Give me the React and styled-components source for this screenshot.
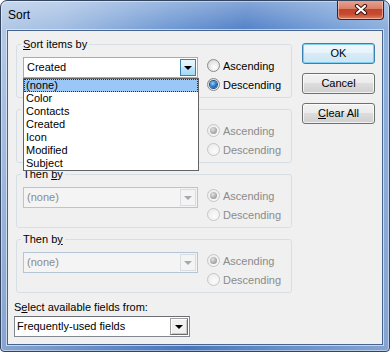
import styled, { createGlobalStyle, css } from 'styled-components';

const GlobalStyle = createGlobalStyle`
  html, body {
    margin: 0;
    padding: 0;
    background: #ffffff;
  }
  body {
    font-family: "Liberation Sans", Arial, sans-serif;
    font-size: 11px;
    color: #000;
  }
`;

const Window = styled.div`
  width: 390px;
  height: 352px;
  box-sizing: border-box;
  border: 1px solid #34465f;
  border-radius: 7px 7px 4px 4px;
  background:
    linear-gradient(180deg, rgba(255, 255, 255, 0.28) 0, rgba(255, 255, 255, 0) 28px),
    linear-gradient(180deg, rgba(30, 70, 140, 0) 0, rgba(30, 70, 140, 0) 40px, rgba(30, 70, 140, 0.22) 100%),
    linear-gradient(100deg, #b3c9e6 0%, #a4bfe3 14%, #729bd4 38%, #5583c8 55%, #77a0d7 74%, #a2bfe4 100%);
  box-shadow: inset 0 0 0 1px rgba(255, 255, 255, 0.45);
  display: flex;
  flex-direction: column;
  overflow: hidden;
`;

const TitleBar = styled.div`
  height: 29px;
  display: flex;
  align-items: flex-start;
  padding-left: 7px;
`;

const Title = styled.span`
  font-family: "Liberation Sans", Arial, sans-serif;
  font-size: 12px;
  line-height: 15px;
  padding-top: 7px;
  color: #000;
`;

const CloseButton = styled.div`
  margin-left: auto;
  margin-right: 5px;
  margin-top: -1px;
  width: 47px;
  height: 20px;
  box-sizing: border-box;
  border: 1px solid #4a1d16;
  border-top: none;
  border-radius: 0 0 4px 4px;
  background: linear-gradient(180deg, #e9a593 0%, #d98068 45%, #c1432b 50%, #c74a30 75%, #e0805e 100%);
  box-shadow: inset 0 0 0 1px rgba(255, 220, 210, 0.55);
  display: flex;
  align-items: center;
  justify-content: center;
`;

const Client = styled.div`
  flex: 1;
  margin: 0 6px 6px 6px;
  background: #f0f0f0;
  border: 1px solid #46648f;
  box-shadow: 0 0 0 1px rgba(230, 238, 248, 0.7);
  display: grid;
  grid-template-columns: 278px 73px;
  column-gap: 10px;
  padding: 6px 7px 0 6px;
`;

const LeftColumn = styled.div`
  display: flex;
  flex-direction: column;
`;

const Group = styled.fieldset`
  margin: 0 0 4px 2px;
  min-width: 0;
  border: 1px solid #d5dfe5;
  border-radius: 3px;
  padding: 5px 6px 3px 6px;
`;

const Legend = styled.legend`
  padding: 0 2px;
  margin-left: -2px;
  line-height: 14px;
  color: #000;
`;

const GroupRow = styled.div`
  display: flex;
  align-items: flex-start;
`;

const ComboWrap = styled.div`
  position: relative;
  margin-top: 1px;
`;

const Combo = styled.div`
  width: ${p => p.$width || 175}px;
  height: 21px;
  box-sizing: border-box;
  display: flex;
  align-items: stretch;
  background: ${p => (p.$disabled ? '#f4f4f4' : '#ffffff')};
  border: 1px solid ${p => (p.$disabled ? '#b5c5d6' : '#a5acb5')};
  ${p =>
    p.$classic &&
    css`
      border-color: #828790;
      border-top-color: #6b6f75;
    `}
`;

const ComboText = styled.span`
  flex: 1;
  padding-left: ${p => (p.$classic ? 2 : 3)}px;
  line-height: 19px;
  color: ${p => (p.$disabled ? '#8b8b8b' : '#000')};
  white-space: nowrap;
  overflow: hidden;
`;

const ArrowButton = styled.div`
  width: 16px;
  margin: 1px;
  box-sizing: border-box;
  display: flex;
  align-items: center;
  justify-content: center;
  ${p =>
    p.$variant === 'hot' &&
    css`
      border: 1px solid #3c7fb1;
      background: linear-gradient(180deg, #eaf6fd 0%, #d9f0fc 50%, #bee6fd 50%, #a7d9f5 100%);
    `}
  ${p =>
    p.$variant === 'disabled' &&
    css`
      border: 1px solid #d9dde2;
      background: #f4f4f4;
    `}
  ${p =>
    p.$variant === 'classic' &&
    css`
      width: 18px;
      border: 1px solid #6b6b6b;
      border-top-color: #a0a0a0;
      border-left-color: #a0a0a0;
      background: #f0f0f0;
      box-shadow: inset 1px 1px 0 #ffffff, inset -1px -1px 0 #c8c8c8;
    `}
`;

const Arrow = styled.span`
  width: 0;
  height: 0;
  border-left: 4px solid transparent;
  border-right: 4px solid transparent;
  border-top: 4px solid ${p => (p.$disabled ? '#a8a8a8' : '#000')};
  margin-top: 1px;
`;

const DropList = styled.div`
  position: absolute;
  top: 100%;
  left: 0;
  width: 176px;
  box-sizing: border-box;
  background: #ffffff;
  border: 1px solid #646464;
  z-index: 10;
`;

const DropItem = styled.div`
  height: 13px;
  line-height: 13px;
  padding-left: 2px;
  box-sizing: border-box;
  white-space: nowrap;
  ${p =>
    p.$selected &&
    css`
      background: #99c8f8;
      outline: 1px dotted #333;
      outline-offset: -1px;
    `}
`;

const RadioColumn = styled.div`
  margin-left: 9px;
  display: flex;
  flex-direction: column;
`;

const RadioRow = styled.label`
  height: 19px;
  display: flex;
  align-items: center;
  gap: 3px;
  color: ${p => (p.$disabled ? '#8b8b8b' : '#000')};
`;

const RadioCircle = styled.span`
  width: 13px;
  height: 13px;
  box-sizing: border-box;
  border-radius: 50%;
  border: 1px solid ${p => (p.$disabled ? '#c6c6c6' : '#8a8a8a')};
  background: ${p =>
    p.$disabled
      ? 'radial-gradient(circle at 60% 65%, #fbfbfb 0%, #eeeeee 70%)'
      : 'radial-gradient(circle at 60% 65%, #ffffff 0%, #e6e6e6 55%, #d2d2d2 100%)'};
  display: flex;
  align-items: center;
  justify-content: center;
  &::after {
    content: '';
    display: ${p => (p.$checked ? 'block' : 'none')};
    width: 7px;
    height: 7px;
    border-radius: 50%;
    background: ${p =>
      p.$disabled
        ? 'radial-gradient(circle at 40% 35%, #e2e2e2 0%, #a9a9a9 60%, #8a8a8a 100%)'
        : 'radial-gradient(circle at 40% 35%, #8fd2ff 0%, #1d73c9 55%, #0b3a73 100%)'};
    box-shadow: ${p => (p.$disabled ? 'none' : '0 0 0 1px #2a4f7a')};
  }
`;

const FieldsLabel = styled.div`
  margin-top: 3px;
  margin-bottom: 2px;
  line-height: 14px;
`;

const ButtonColumn = styled.div`
  display: flex;
  flex-direction: column;
  gap: 9px;
  padding-top: 6px;
`;

const Button = styled.div`
  height: 21px;
  box-sizing: border-box;
  border: 1px solid #707070;
  border-radius: 3px;
  background: linear-gradient(180deg, #f2f2f2 0%, #ebebeb 49%, #dddddd 50%, #cfcfcf 100%);
  box-shadow: inset 0 0 0 1px rgba(255, 255, 255, 0.7);
  display: flex;
  align-items: center;
  justify-content: center;
  line-height: 13px;
  ${p =>
    p.$default &&
    css`
      border-color: #3c7fb1;
      background: linear-gradient(180deg, #f1f8fd 0%, #e6f2fa 49%, #d8ebf7 50%, #cde5f5 100%);
      box-shadow: inset 0 0 0 1px #7fd0f3;
    `}
`;

const radioLabels = ['Ascending', 'Descending'];
const fieldOptions = ['(none)', 'Color', 'Contacts', 'Created', 'Icon', 'Modified', 'Subject'];

function Radios({ checked, disabled }) {
  return (
    <RadioColumn>
      {radioLabels.map((label, i) => (
        <RadioRow key={label} $disabled={disabled}>
          <RadioCircle $checked={checked === i} $disabled={disabled} />
          {label}
        </RadioRow>
      ))}
    </RadioColumn>
  );
}

function SortGroup({ legend, value, disabled, open, checked }) {
  return (
    <Group>
      <Legend>{legend}</Legend>
      <GroupRow>
        <ComboWrap>
          <Combo $disabled={disabled}>
            <ComboText $disabled={disabled}>{value}</ComboText>
            <ArrowButton $variant={disabled ? 'disabled' : 'hot'}>
              <Arrow $disabled={disabled} />
            </ArrowButton>
          </Combo>
          {open && (
            <DropList>
              {fieldOptions.map((opt, i) => (
                <DropItem key={opt} $selected={i === 0}>
                  {opt}
                </DropItem>
              ))}
            </DropList>
          )}
        </ComboWrap>
        <Radios checked={checked} disabled={disabled} />
      </GroupRow>
    </Group>
  );
}

function CloseGlyph() {
  return (
    <svg width="14" height="11" viewBox="0 0 14 11">
      <path d="M3 2 L11 9 M11 2 L3 9" stroke="#3b1510" strokeWidth="4.2" strokeLinecap="round" fill="none" />
      <path d="M3 2 L11 9 M11 2 L3 9" stroke="#ffffff" strokeWidth="2.2" strokeLinecap="round" fill="none" />
    </svg>
  );
}

export default function App() {
  return (
    <>
      <GlobalStyle />
      <Window>
        <TitleBar>
          <Title>Sort</Title>
          <CloseButton>
            <CloseGlyph />
          </CloseButton>
        </TitleBar>
        <Client>
          <LeftColumn>
            <SortGroup
              legend={<><u>S</u>ort items by</>}
              value="Created"
              open
              checked={1}
            />
            <SortGroup legend={<>Then <u>b</u>y</>} value="(none)" disabled checked={0} />
            <SortGroup legend={<>Then <u>b</u>y</>} value="(none)" disabled checked={0} />
            <SortGroup legend={<>Then b<u>y</u></>} value="(none)" disabled checked={0} />
            <FieldsLabel>
              S<u>e</u>lect available fields from:
            </FieldsLabel>
            <Combo $width={176} $classic>
              <ComboText $classic>Frequently-used fields</ComboText>
              <ArrowButton $variant="classic">
                <Arrow />
              </ArrowButton>
            </Combo>
          </LeftColumn>
          <ButtonColumn>
            <Button $default>OK</Button>
            <Button>Cancel</Button>
            <Button>
              <span>
                <u>C</u>lear All
              </span>
            </Button>
          </ButtonColumn>
        </Client>
      </Window>
    </>
  );
}
